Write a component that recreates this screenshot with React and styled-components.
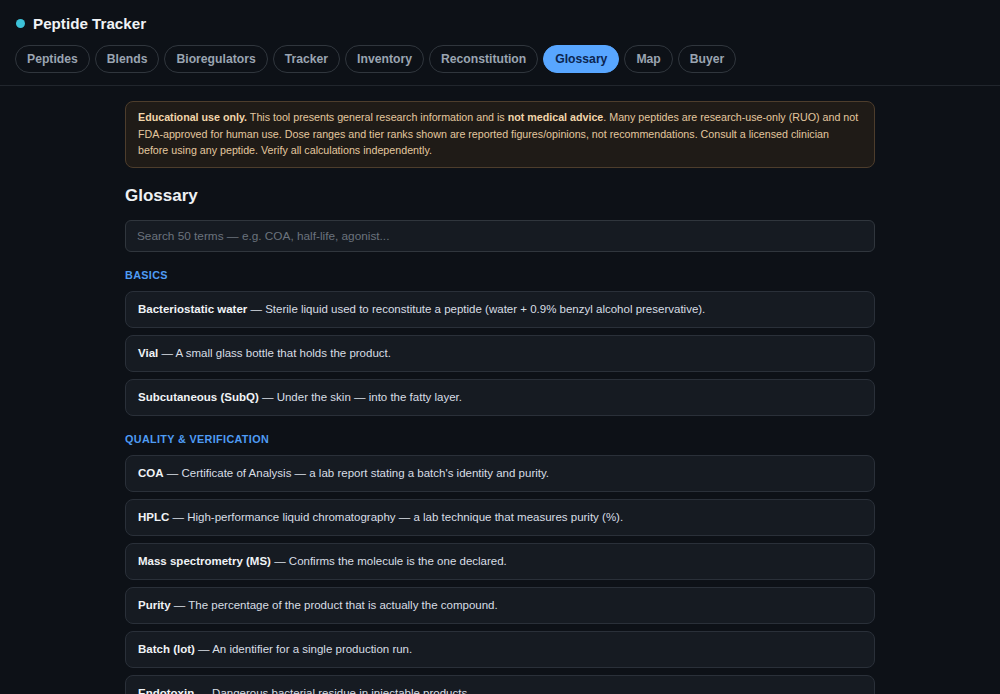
import styled, { createGlobalStyle } from "styled-components";
import { useState } from "react";

const TABS = [
  "Peptides",
  "Blends",
  "Bioregulators",
  "Tracker",
  "Inventory",
  "Reconstitution",
  "Glossary",
  "Map",
  "Buyer",
];

const SECTIONS = [
  {
    title: "Basics",
    terms: [
      {
        term: "Bacteriostatic water",
        text: "Sterile liquid used to reconstitute a peptide (water + 0.9% benzyl alcohol preservative).",
      },
      { term: "Vial", text: "A small glass bottle that holds the product." },
      {
        term: "Subcutaneous (SubQ)",
        text: "Under the skin — into the fatty layer.",
      },
    ],
  },
  {
    title: "Quality & Verification",
    terms: [
      {
        term: "COA",
        text: "Certificate of Analysis — a lab report stating a batch's identity and purity.",
      },
      {
        term: "HPLC",
        text: "High-performance liquid chromatography — a lab technique that measures purity (%).",
      },
      {
        term: "Mass spectrometry (MS)",
        text: "Confirms the molecule is the one declared.",
      },
      {
        term: "Purity",
        text: "The percentage of the product that is actually the compound.",
      },
      { term: "Batch (lot)", text: "An identifier for a single production run." },
      {
        term: "Endotoxin",
        text: "Dangerous bacterial residue in injectable products.",
      },
    ],
  },
];

const App = () => {
  const [active, setActive] = useState("Glossary");
  const [query, setQuery] = useState("");

  const q = query.trim().toLowerCase();
  const sections = SECTIONS.map((s) => ({
    ...s,
    terms: s.terms.filter(
      (t) =>
        !q ||
        t.term.toLowerCase().includes(q) ||
        t.text.toLowerCase().includes(q)
    ),
  })).filter((s) => s.terms.length > 0);

  return (
    <>
      <GlobalStyle />
      <Header>
        <Brand>
          <Dot />
          <Title>Peptide Tracker</Title>
        </Brand>
        <Tabs>
          {TABS.map((tab) => (
            <Tab
              key={tab}
              type="button"
              $active={tab === active}
              onClick={() => setActive(tab)}
            >
              {tab}
            </Tab>
          ))}
        </Tabs>
      </Header>

      <Main>
        <Notice>
          <strong>Educational use only.</strong> This tool presents general
          research information and is <strong>not medical advice</strong>. Many
          peptides are research-use-only (RUO) and not FDA-approved for human
          use. Dose ranges and tier ranks shown are reported figures/opinions,
          not recommendations. Consult a licensed clinician before using any
          peptide. Verify all calculations independently.
        </Notice>

        <Heading>Glossary</Heading>
        <Search
          type="text"
          value={query}
          onChange={(e) => setQuery(e.target.value)}
          placeholder="Search 50 terms — e.g. COA, half-life, agonist..."
        />

        {sections.map((section) => (
          <Section key={section.title}>
            <SectionLabel>{section.title}</SectionLabel>
            <TermList>
              {section.terms.map((t) => (
                <TermCard key={t.term}>
                  <Term>{t.term}</Term> — {t.text}
                </TermCard>
              ))}
            </TermList>
          </Section>
        ))}
      </Main>
    </>
  );
};

const GlobalStyle = createGlobalStyle`
  html, body {
    margin: 0;
    background: #0d1117;
    color: #c9d1d9;
    font-family: "Liberation Sans", Arial, sans-serif;
  }
  * {
    box-sizing: border-box;
  }
`;

const Header = styled.header`
  padding: 13px 15px 12px;
  border-bottom: 1px solid #21262d;
`;

const Brand = styled.div`
  display: flex;
  align-items: center;
  gap: 8px;
  height: 21px;
  padding-left: 1px;
`;

const Dot = styled.span`
  width: 9px;
  height: 9px;
  border-radius: 50%;
  background: #3cc2d8;
`;

const Title = styled.h1`
  margin: 0;
  font-size: 15.2px;
  font-weight: 700;
  color: #f0f3f6;
`;

const Tabs = styled.nav`
  display: flex;
  flex-wrap: wrap;
  gap: 5px;
  margin-top: 11px;
`;

const Tab = styled.button`
  height: 28px;
  padding: 0 11px;
  border-radius: 999px;
  border: 1px solid ${(p) => (p.$active ? "#58a6ff" : "#30363d")};
  background: ${(p) => (p.$active ? "#58a6ff" : "transparent")};
  color: ${(p) => (p.$active ? "#0b2550" : "#9aa4b1")};
  font-family: inherit;
  font-size: 12.2px;
  font-weight: 700;
  cursor: pointer;
`;

const Main = styled.main`
  width: 750px;
  margin: 0 auto;
  padding-top: 15px;
`;

const Notice = styled.div`
  padding: 7px 14px 8px 12px;
  border: 1px solid #4d3d2c;
  border-radius: 8px;
  background: #1f1b17;
  color: #e3c79f;
  font-size: 10.7px;
  line-height: 16.5px;

  strong {
    color: #f2d6ab;
  }
`;

const Heading = styled.h2`
  margin: 16px 0 12px;
  font-size: 17px;
  line-height: 24px;
  font-weight: 700;
  color: #eef1f4;
`;

const Search = styled.input`
  display: block;
  width: 100%;
  height: 32px;
  padding: 0 11px;
  border: 1px solid #30363d;
  border-radius: 6px;
  background: #161b22;
  color: #c9d1d9;
  font-family: inherit;
  font-size: 11.8px;
  outline: none;

  &::placeholder {
    color: #6b737d;
  }
`;

const Section = styled.section`
  margin-top: 17px;
`;

const SectionLabel = styled.div`
  font-size: 10.8px;
  line-height: 13px;
  font-weight: 700;
  letter-spacing: 0.35px;
  text-transform: uppercase;
  color: #4f9cf4;
`;

const TermList = styled.div`
  display: flex;
  flex-direction: column;
  gap: 7px;
  margin-top: 9px;
`;

const TermCard = styled.div`
  padding: 11px 12px;
  border: 1px solid #2a3039;
  border-radius: 8px;
  background: #161b22;
  color: #d8dee5;
  font-size: 11.5px;
  line-height: 13px;
`;

const Term = styled.strong`
  color: #f0f3f6;
`;

export default App;
